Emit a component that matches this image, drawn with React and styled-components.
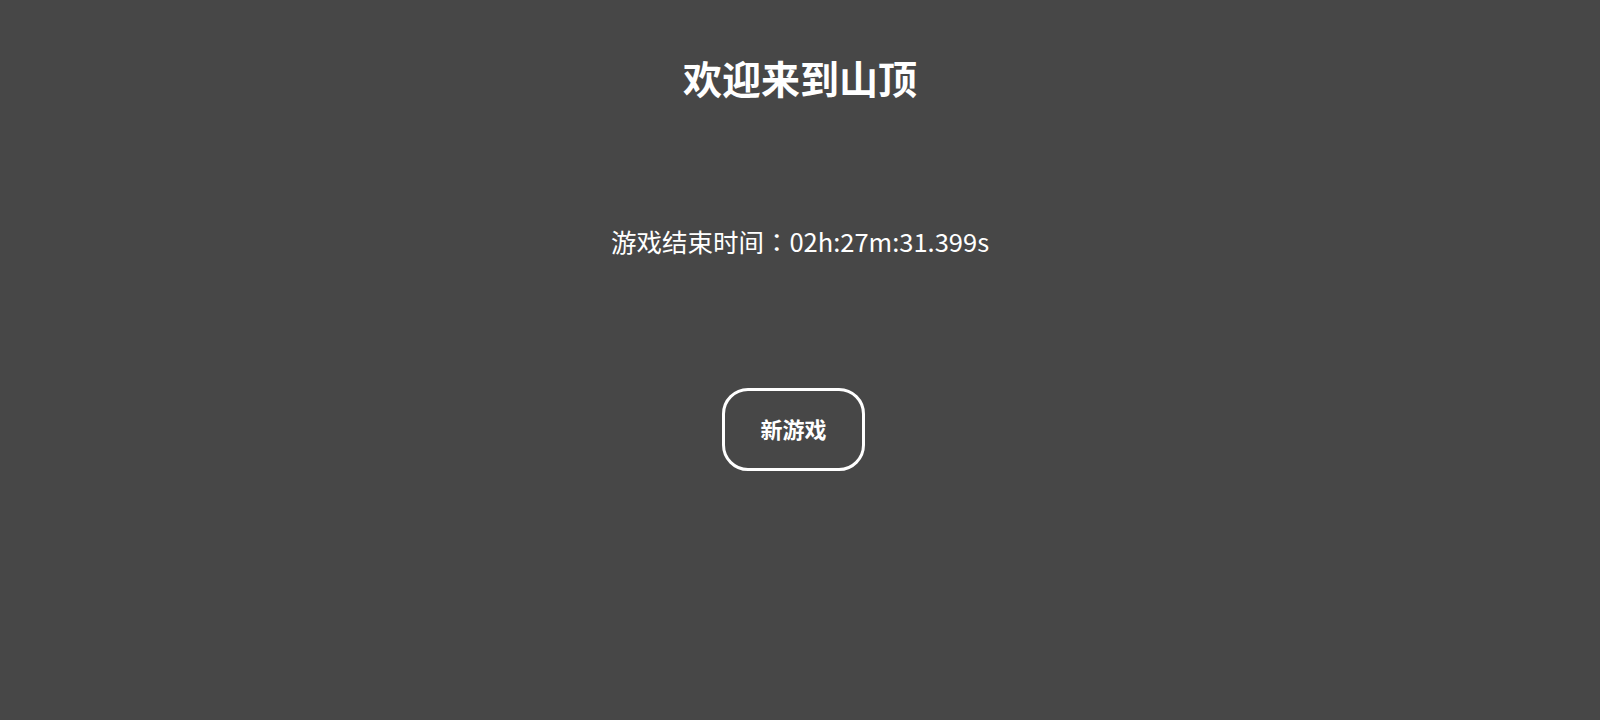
import React from 'react'
import styled, { createGlobalStyle } from 'styled-components'

const GlobalStyle = createGlobalStyle`
    html, body{
        margin: 0;
        padding: 0;
        background: #474747;
        font-family: "Noto Sans CJK SC", "Noto Sans", sans-serif;
        color: #fff;
    }
`

const Wrapper = styled.main`
    width: 100%;
    height: 720px;
    background: #474747;
    display: flex;
    flex-direction: column;
    align-items: center;
    .title{
        margin: 0;
        margin-top: 53px;
        font-size: 39px;
        font-weight: 700;
        line-height: 48px;
    }
    .time{
        margin: 0;
        margin-top: 122px;
        font-family: "Noto Sans CJK JP", "Noto Sans CJK SC", sans-serif;
        font-size: 25.5px;
        font-weight: 400;
        line-height: 36px;
    }
`

const Button = styled.button`
    margin-top: 129px;
    margin-right: 13px;
    width: 143px;
    height: 83px;
    padding: 0 0 4px;
    border: 3px solid #fff;
    border-radius: 26px;
    background: transparent;
    color: #fff;
    font-family: "Noto Sans CJK SC", sans-serif;
    font-size: 22px;
    font-weight: 700;
    cursor: pointer;
`

const App = () => {
    return (
        <>
            <GlobalStyle />
            <Wrapper>
                <h1 className='title'>欢迎来到山顶</h1>
                <p className='time'>游戏结束时间：02h:27m:31.399s</p>
                <Button>新游戏</Button>
            </Wrapper>
        </>
    )
}

export default App
